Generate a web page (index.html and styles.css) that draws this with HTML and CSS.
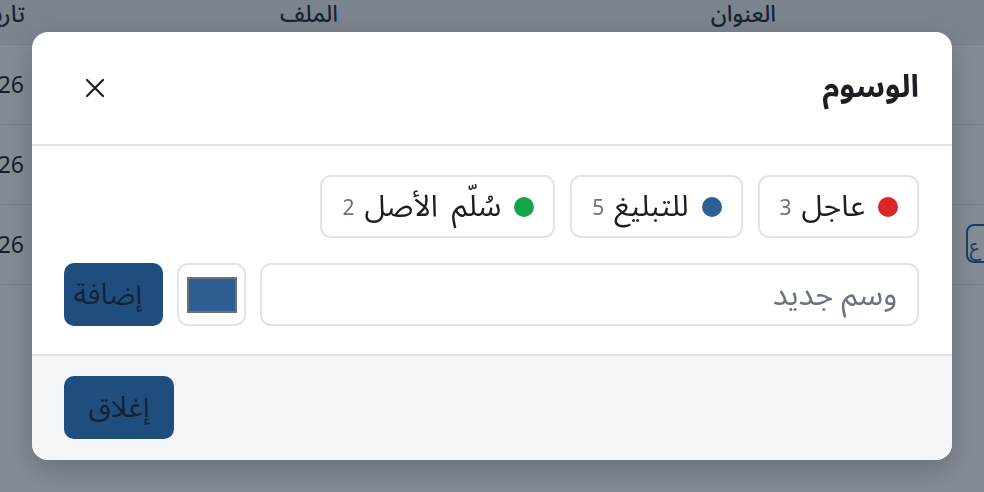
FILE: index.html
```html
<!DOCTYPE html>
<html lang="ar" dir="rtl">
<head>
<meta charset="utf-8">
<link rel="stylesheet" href="styles.css">
</head>
<body>
<div class="page">
  <table class="grid">
    <thead>
      <tr><th class="c-title">العنوان</th><th class="c-file">الملف</th><th class="c-date">تاريخ</th></tr>
    </thead>
    <tbody>
      <tr><td></td><td></td><td class="c-date">2026</td></tr>
      <tr><td></td><td></td><td class="c-date">2026</td></tr>
      <tr><td></td><td></td><td class="c-date">2026</td></tr>
      <tr><td></td><td></td><td class="c-date"></td></tr>
    </tbody>
  </table>
  <span class="row-badge">ع</span>
</div>
<div class="overlay"></div>
<div class="modal">
  <div class="modal-head">
    <h2 class="modal-title">الوسوم</h2>
    <button class="close-btn" aria-label="إغلاق">
      <svg width="22" height="22" viewBox="0 0 22 22"><path d="M3 3 L19 19 M19 3 L3 19" stroke="#1b1f24" stroke-width="2.2" stroke-linecap="round"/></svg>
    </button>
  </div>
  <div class="modal-body">
    <div class="tags">
      <span class="tag"><span class="dot red"></span><span class="tag-name">عاجل</span><span class="tag-count">3</span></span>
      <span class="tag"><span class="dot blue"></span><span class="tag-name">للتبليغ</span><span class="tag-count">5</span></span>
      <span class="tag"><span class="dot green"></span><span class="tag-name wide">سُلّم الأصل</span><span class="tag-count">2</span></span>
    </div>
    <div class="add-row">
      <input class="tag-input" type="text" placeholder="وسم جديد">
      <span class="color-box"><span class="swatch"></span></span>
      <button class="btn btn-add">إضافة</button>
    </div>
  </div>
  <div class="modal-foot">
    <button class="btn btn-close">إغلاق</button>
  </div>
</div>
</body>
</html>
```
FILE: styles.css
```css
* { box-sizing: border-box; }
html, body { margin: 0; padding: 0; }
body {
  width: 984px;
  height: 492px;
  overflow: hidden;
  font-family: "Noto Sans Arabic", "Noto Sans", sans-serif;
  background: #ffffff;
  color: #1b1f24;
  position: relative;
}
.page { position: relative; height: 492px; overflow: hidden; }
.grid {
  border-collapse: collapse;
  width: 1010px;
  table-layout: fixed;
}
.grid th {
  height: 44px;
  background: #eef1f5;
  font-size: 23px;
  font-weight: 500;
  line-height: 30px;
  color: #1f2937;
  text-align: right;
  padding: 0;
  vertical-align: top;
}
.grid td {
  height: 80px;
  border-top: 1px solid #dfe3e8;
  font-family: "Noto Sans", sans-serif;
  font-size: 23px;
  line-height: 30px;
  color: #1b1f24;
  padding: 0;
  text-align: right;
}
.grid th.c-title { width: 570px; padding-right: 208px; }
.grid th.c-file { width: 313px; padding-right: 76px; }
.grid .c-date { width: 127px; padding-right: 76px; }
.grid td.c-date { padding-right: 77px; }
.row-badge {
  position: absolute;
  left: 966px;
  top: 224px;
  width: 40px;
  height: 39px;
  border: 2px solid #1f5f9a;
  border-radius: 8px;
  font-size: 20px;
  color: #1f5f9a;
  padding-right: 24px;
}
.overlay {
  position: fixed;
  inset: 0;
  background: rgba(20, 32, 50, 0.52);
}
.modal {
  position: fixed;
  left: 32px;
  top: 32px;
  width: 920px;
  height: 428px;
  background: #ffffff;
  border-radius: 16px;
  overflow: hidden;
  display: flex;
  flex-direction: column;
  box-shadow: 0 10px 30px rgba(0,0,0,0.2);
}
.modal-head {
  height: 114px;
  display: flex;
  align-items: center;
  justify-content: space-between;
  padding: 0 33px 0 44px;
  border-bottom: 2px solid #e3e6ea;
}
.modal-title {
  margin: 0;
  font-size: 31px;
  font-weight: 700;
  color: #1b1f24;
  line-height: 1.2;
}
.close-btn {
  background: none;
  border: 0;
  padding: 8px;
  cursor: pointer;
  display: flex;
}
.modal-body {
  padding: 29px 33px 28px 32px;
  display: flex;
  flex-direction: column;
  gap: 25px;
  border-bottom: 2px solid #e3e6ea;
}
.tags { display: flex; gap: 15px; }
.tag {
  height: 63px;
  display: inline-flex;
  align-items: center;
  padding: 0 19px 0 20px;
  border: 2px solid #e1e4e8;
  border-radius: 11px;
  background: #fff;
}
.dot { width: 20px; height: 20px; border-radius: 50%; display: inline-block; flex: none; margin-left: 13px; }
.red { background: #dc2626; }
.blue { background: #2d5f95; }
.green { background: #16a34a; }
.tag-name { font-size: 30px; color: #1b1f24; line-height: 1; margin-left: 10px; }
.tag-name.wide { word-spacing: 6px; }
.tag-count { font-family: "Noto Sans", sans-serif; font-size: 21px; color: #6b7280; }
.add-row { display: flex; gap: 14px; height: 63px; }
.tag-input {
  flex: 1;
  min-width: 0;
  height: 63px;
  border: 2px solid #e1e4e8;
  border-radius: 11px;
  font-family: inherit;
  font-size: 31px;
  padding: 0 20px;
  color: #1b1f24;
  direction: rtl;
}
.tag-input::placeholder { color: #6b7280; }
.color-box {
  flex: none;
  width: 69px;
  height: 63px;
  border: 2px solid #e1e4e8;
  border-radius: 11px;
  display: flex;
  align-items: center;
  justify-content: center;
}
.swatch {
  width: 50px;
  height: 36px;
  background: #2d5f95;
  border: 2px solid #707070;
}
.btn {
  flex: none;
  height: 63px;
  border: 0;
  border-radius: 10px;
  background: #1f4e7e;
  color: #142334;
  font-family: inherit;
  font-size: 29px;
  line-height: 1;
  padding: 0 21px;
}
.btn-add {
  width: 99px;
  padding: 0 21px 0 0;
  text-align: right;
  white-space: nowrap;
  overflow: visible;
}
.modal-foot {
  flex: 1;
  background: #f5f6fa;
  padding: 20px 32px;
  display: flex;
  justify-content: flex-end;
  align-items: flex-start;
}
.btn-close { width: 110px; }
```
